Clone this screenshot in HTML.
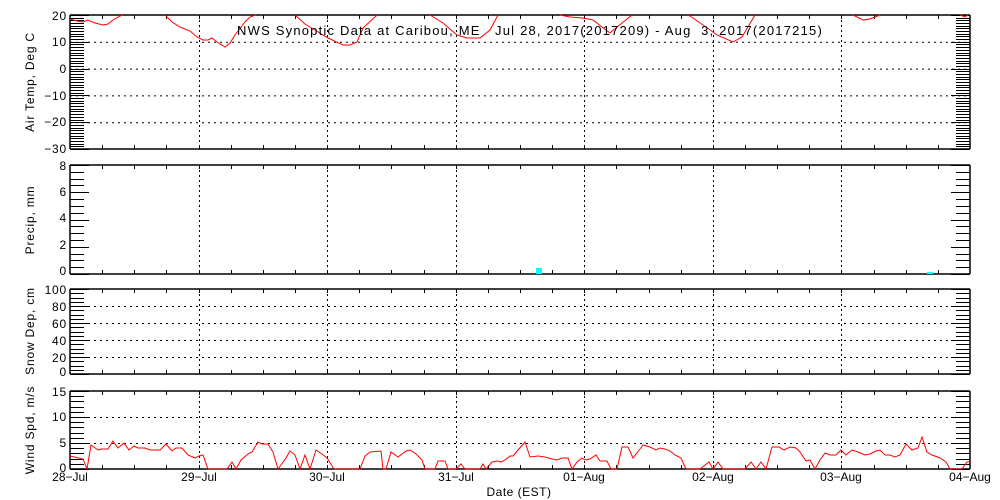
<!DOCTYPE html>
<html><head><meta charset="utf-8"><style>
html,body{margin:0;padding:0;background:#fff;width:1000px;height:500px;overflow:hidden}
svg{display:block}
text{font-family:"Liberation Sans",sans-serif;font-size:12px;fill:#000}
</style></head><body>
<svg id="s" width="1000" height="500" xmlns="http://www.w3.org/2000/svg">
<g id="g"></g>
<polyline fill="none" stroke="#f00" stroke-width="1" points="70,19 77,21 83,22 88,20 95,23 103,25 108,24 113,20 120,16 123,15"/>
<polyline fill="none" stroke="#f00" stroke-width="1" points="165,15 172,22 180,27 190,31 197,37 203,40 208,40 212,38 217,42 225,47 230,43 235,35 245,22 250,17 256,15"/>
<polyline fill="none" stroke="#f00" stroke-width="1" points="295,15 305,24 315,30 328,38 343,45 350,45 357,42 363,28 377,15"/>
<polyline fill="none" stroke="#f00" stroke-width="1" points="430,15 443,23 457,35 467,38 480,38 490,30 498,15"/>
<polyline fill="none" stroke="#f00" stroke-width="1" points="560,15 570,17 583,18 593,20 602,27 610,33 617,27 632,15"/>
<polyline fill="none" stroke="#f00" stroke-width="1" points="688,15 693,18 703,25 717,35 733,42 742,37 755,15"/>
<polyline fill="none" stroke="#f00" stroke-width="1" points="853,15 863,20 870,19 880,15"/>
<polyline fill="none" stroke="#f00" stroke-width="1" points="960,15 965,17 968,15"/>
<rect x="536" y="268" width="6" height="6" fill="#0ff"/>
<rect x="927" y="272" width="6" height="2" fill="#0ff"/>
<polyline fill="none" stroke="#f00" stroke-width="1" points="70,456 83,459 87,469 91,445 98,450 102,449 108,449 113,441 118,448 124,443 129,450 134,446 138,448 145,448 150,450 160,450 166,444 172,451 176,448 182,448 188,455 195,458 199,456 203,455 208,469 227,469 232,462 236,469 241,460 248,454 252,452 258,442 262,444 268,444 273,452 278,469 286,458 290,451 295,455 300,469 305,455 310,469 316,450 322,454 327,458 334,469 360,469 365,456 370,452 381,451 383,469 386,469 391,452 398,457 406,451 410,450 416,454 422,460 425,469 435,469 438,461 445,461 448,469 456,469 461,464 465,469 480,469 483,464 486,469 492,462 497,461 501,462 505,460 510,456 513,456 518,450 525,442 530,457 538,456 545,457 552,459 557,460 562,458 568,458 572,469 577,462 582,458 585,460 590,459 596,455 600,461 607,461 611,469 617,469 622,447 628,447 633,458 640,449 643,445 650,447 656,450 660,448 665,449 670,451 675,455 681,458 686,469 700,469 709,462 713,469 718,462 723,469 745,469 751,462 756,469 761,462 766,469 772,447 779,447 784,450 790,447 796,448 800,452 806,461 810,460 815,469 820,460 825,453 830,455 836,455 841,450 846,455 852,450 858,452 865,455 870,454 876,451 880,450 885,455 890,455 895,457 900,455 906,444 912,450 918,448 922,437 927,452 932,455 940,458 946,462 950,469 962,469 967,462 970,462"/>
<text x="530" y="35" text-anchor="middle" style="font-size:13px;letter-spacing:1.2px" xml:space="preserve">NWS Synoptic Data at Caribou, ME   Jul 28, 2017(2017209) - Aug  3, 2017(2017215)</text>
<g text-anchor="end" style="letter-spacing:0.8px">
<text x="67" y="20">20</text><text x="67" y="46">10</text><text x="67" y="73">0</text><text x="67" y="100">−10</text><text x="67" y="126">−20</text><text x="67" y="153">−30</text>
<text x="67" y="170">8</text><text x="67" y="196">6</text><text x="67" y="222">4</text><text x="67" y="249">2</text><text x="67" y="275">0</text>
<text x="67" y="294">100</text><text x="67" y="311">80</text><text x="67" y="328">60</text><text x="67" y="345">40</text><text x="67" y="362">20</text><text x="67" y="376">0</text>
<text x="67" y="396">15</text><text x="67" y="421">10</text><text x="67" y="447">5</text><text x="67" y="472">0</text>
</g>
<g text-anchor="middle">
<text x="70" y="481">28−Jul</text><text x="199" y="481">29−Jul</text><text x="327" y="481">30−Jul</text><text x="456" y="481">31−Jul</text><text x="584" y="481">01−Aug</text><text x="713" y="481">02−Aug</text><text x="841" y="481">03−Aug</text><text x="970" y="481">04−Aug</text>
<text x="519" y="496" style="letter-spacing:0.5px">Date (EST)</text>
<g style="letter-spacing:0.8px">
<text transform="translate(34,82) rotate(-90)">Air Temp, Deg C</text>
<text transform="translate(34,220) rotate(-90)">Precip, mm</text>
<text transform="translate(34,331) rotate(-90)">Snow Dep, cm</text>
<text transform="translate(34,430) rotate(-90)">Wind Spd, m/s</text>
</g>
</g>
</svg>
<script>
var g=document.getElementById('g'),NS='http://www.w3.org/2000/svg';
function L(x1,y1,x2,y2,d){var l=document.createElementNS(NS,'line');l.setAttribute('x1',x1);l.setAttribute('y1',y1);l.setAttribute('x2',x2);l.setAttribute('y2',y2);l.setAttribute('stroke','#000');l.setAttribute('stroke-width',d=='w'?1.5:1);if(d&&d!='w')l.setAttribute('stroke-dasharray',d);g.appendChild(l);}
var P=[[15,149,-30,20,1,10,[10,0,-10,-20]],[165,274,0,8,0.5,2,[]],[289,374,0,100,5,20,[20,40,60,80]],[391,469,0,15,1,5,[5,10]]];
var X0=70,X1=970,days=[199,327,456,584,713,841];
P.forEach(function(p){var t=p[0],b=p[1],mn=p[2],mx=p[3];function Y(v){return b-(v-mn)/(mx-mn)*(b-t);}
p[6].forEach(function(v){L(X0,Y(v)+.5,X1,Y(v)+.5,'2,4');});
days.forEach(function(x){L(x+.5,t,x+.5,b,'2,3');});
for(var v=mn;v<=mx+1e-6;v+=p[4]){var y=Math.round(Y(v))+.5,mj=Math.abs(v/p[5]-Math.round(v/p[5]))<1e-6;var len=mj?19:14;L(X0,y,X0+len,y);L(X1-len,y,X1,y);}
for(var i=1;i<28;i++){var x=Math.round(X0+i*900/28)+.5;L(x,t,x,t+4);L(x,b-4,x,b);}
L(X0,t,X1,t,'w');L(X0,b,X1,b,'w');L(X0,t,X0,b,'w');L(X1,t,X1,b,'w');});
</script>
</body></html>
